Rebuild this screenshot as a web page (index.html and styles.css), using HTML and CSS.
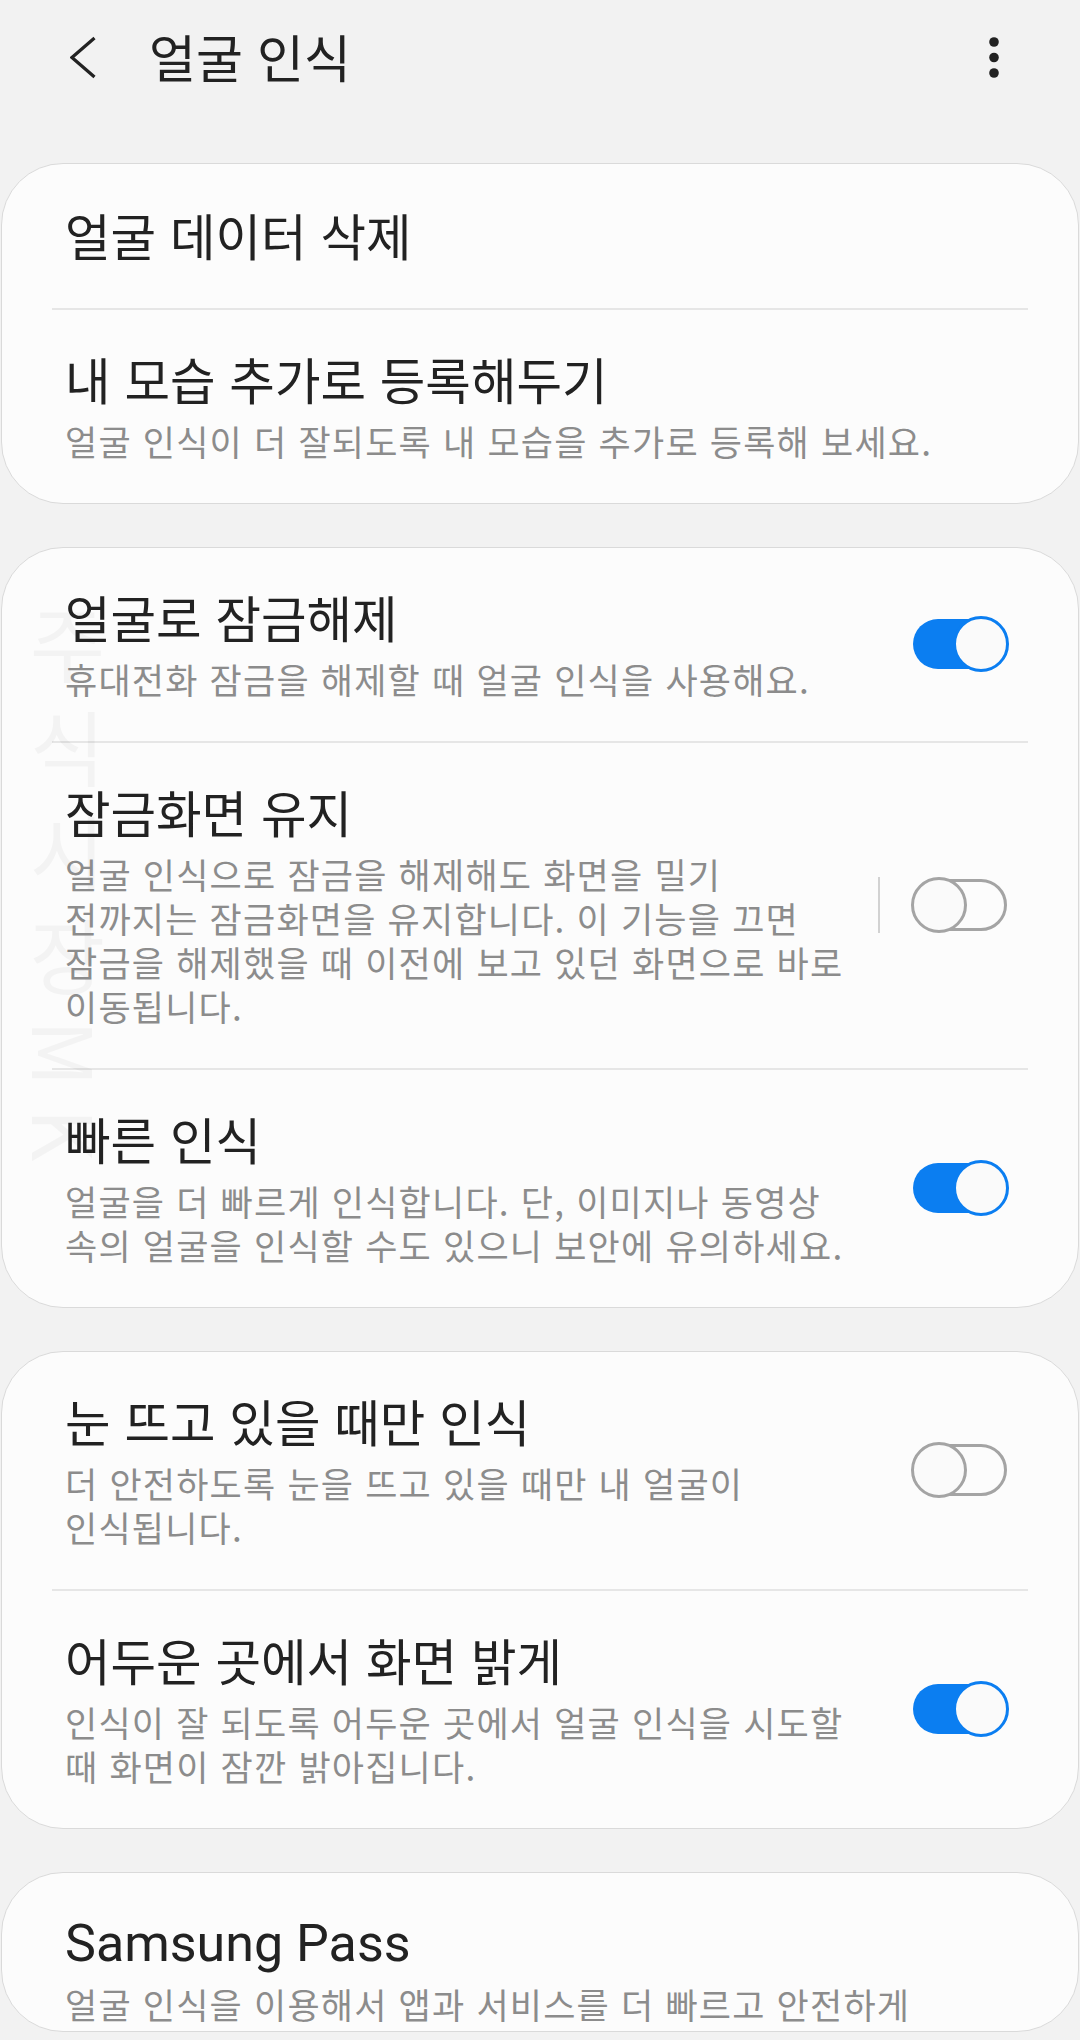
FILE: index.html
```html
<!DOCTYPE html>
<html lang="ko">
<head>
<meta charset="utf-8">
<title>얼굴 인식</title>
<link rel="stylesheet" href="styles.css">
</head>
<body>
<header class="appbar">
  <svg class="appbar__back" viewBox="0 0 26 44" aria-hidden="true"><path d="M24.5 3 L2 22.5 L24.5 42" fill="none" stroke="#222" stroke-width="3.2" stroke-linejoin="miter"/></svg>
  <h1 class="appbar__title">얼굴 인식</h1>
  <svg class="appbar__more" viewBox="0 0 12 44" aria-hidden="true"><circle cx="6" cy="8" r="4.8" fill="#222"/><circle cx="6" cy="23.5" r="4.8" fill="#222"/><circle cx="6" cy="39" r="4.8" fill="#222"/></svg>
</header>

<main class="list">
  <section class="card">
    <div class="row row--single">
      <div class="row__text"><div class="row__title">얼굴 데이터 삭제</div></div>
    </div>
    <div class="divider"></div>
    <div class="row">
      <div class="row__text">
        <div class="row__title">내 모습 추가로 등록해두기</div>
        <div class="row__sub">얼굴 인식이 더 잘되도록 내 모습을 추가로 등록해 보세요.</div>
      </div>
    </div>
  </section>

  <section class="card">
    <div class="watermark" aria-hidden="true">주식시장MK</div>
    <div class="row">
      <div class="row__text">
        <div class="row__title">얼굴로 잠금해제</div>
        <div class="row__sub">휴대전화 잠금을 해제할 때 얼굴 인식을 사용해요.</div>
      </div>
      <span class="switch switch--on"><span class="switch__track"></span><span class="switch__thumb"></span></span>
    </div>
    <div class="divider"></div>
    <div class="row">
      <div class="row__text">
        <div class="row__title">잠금화면 유지</div>
        <div class="row__sub">얼굴 인식으로 잠금을 해제해도 화면을 밀기<br>전까지는 잠금화면을 유지합니다. 이 기능을 끄면<br>잠금을 해제했을 때 이전에 보고 있던 화면으로 바로<br>이동됩니다.</div>
      </div>
      <span class="vsep"></span>
      <span class="switch switch--off"><span class="switch__track"></span><span class="switch__thumb"></span></span>
    </div>
    <div class="divider"></div>
    <div class="row">
      <div class="row__text">
        <div class="row__title">빠른 인식</div>
        <div class="row__sub">얼굴을 더 빠르게 인식합니다. 단, 이미지나 동영상<br>속의 얼굴을 인식할 수도 있으니 보안에 유의하세요.</div>
      </div>
      <span class="switch switch--on"><span class="switch__track"></span><span class="switch__thumb"></span></span>
    </div>
  </section>

  <section class="card">
    <div class="row">
      <div class="row__text">
        <div class="row__title">눈 뜨고 있을 때만 인식</div>
        <div class="row__sub">더 안전하도록 눈을 뜨고 있을 때만 내 얼굴이<br>인식됩니다.</div>
      </div>
      <span class="switch switch--off"><span class="switch__track"></span><span class="switch__thumb"></span></span>
    </div>
    <div class="divider"></div>
    <div class="row">
      <div class="row__text">
        <div class="row__title">어두운 곳에서 화면 밝게</div>
        <div class="row__sub">인식이 잘 되도록 어두운 곳에서 얼굴 인식을 시도할<br>때 화면이 잠깐 밝아집니다.</div>
      </div>
      <span class="switch switch--on"><span class="switch__track"></span><span class="switch__thumb"></span></span>
    </div>
  </section>

  <section class="card card--cut">
    <div class="row row--top">
      <div class="row__text">
        <div class="row__title row__title--latin">Samsung Pass</div>
        <div class="row__sub">얼굴 인식을 이용해서 앱과 서비스를 더 빠르고 안전하게</div>
      </div>
    </div>
  </section>
</main>
</body>
</html>
```

FILE: styles.css
```css
* {
  box-sizing: border-box;
  margin: 0;
  padding: 0;
}

html,
body {
  background: #f2f2f2;
}

body {
  width: 1080px;
  height: 2040px;
  overflow: hidden;
  font-family: "Noto Sans CJK KR", "Noto Sans", sans-serif;
  color: #222;
}

/* ---------- app bar ---------- */
.appbar {
  height: 112px;
  display: flex;
  align-items: center;
  padding: 0 80px 0 70px;
}

.appbar__back {
  width: 26px;
  height: 44px;
  margin-top: 2px;
  flex: none;
}

.appbar__title {
  margin-left: 53px;
  font-size: 51px;
  font-weight: 400;
  line-height: 60px;
  color: #222;
}

.appbar__more {
  margin-left: auto;
  width: 12px;
  height: 44px;
  flex: none;
}

/* ---------- list ---------- */
.list {
  display: flex;
  flex-direction: column;
  gap: 43px;
  padding: 51px 1px 0;
}

.card {
  position: relative;
  overflow: hidden;
  background: #fcfcfc;
  border: 1px solid #dadada;
  border-radius: 62px;
}

.card--cut {
  height: 160px;
  flex: none;
}

.row {
  position: relative;
  display: flex;
  align-items: center;
  padding: 39px 69px 40px 63px;
}

.row--single {
  padding-top: 41px;
  padding-bottom: 43px;
}

.row--top {
  padding-top: 41px;
}

.row__text {
  flex: 1;
  min-width: 0;
}

.row__title {
  font-size: 49.5px;
  line-height: 60px;
  font-weight: 400;
  color: #222;
  white-space: nowrap;
}

.row__title--latin {
  font-family: Roboto, "Noto Sans CJK KR", sans-serif;
  font-size: 52px;
}

.row__sub {
  margin-top: 10px;
  font-size: 35px;
  line-height: 44px;
  letter-spacing: 1.2px;
  color: #8c8c8c;
  white-space: nowrap;
}

.row--top .row__sub {
  margin-top: 8px;
}

.divider {
  height: 2px;
  margin: 0 50px;
  background: #e6e6e6;
}

.vsep {
  flex: none;
  width: 2px;
  height: 56px;
  margin-right: 31px;
  background: #d2d2d2;
}

/* ---------- switch ---------- */
.switch {
  position: relative;
  flex: none;
  width: 98px;
  height: 58px;
}

.switch__track {
  position: absolute;
  left: 2px;
  top: 4px;
  width: 94px;
  height: 50px;
  border-radius: 25px;
}

.switch__thumb {
  position: absolute;
  top: 1px;
  width: 56px;
  height: 56px;
  border-radius: 50%;
  background: #fafafa;
  border: 3px solid;
}

.switch--on .switch__track {
  background: #0b7ef1;
}

.switch--on .switch__thumb {
  right: 0;
  border-color: #0b7ef1;
}

.switch--off .switch__track {
  top: 3px;
  height: 52px;
  border: 3px solid #a4a4a4;
  border-radius: 26px;
}

.switch--off .switch__thumb {
  left: 0;
  border-color: #a4a4a4;
}

/* ---------- faint watermark ---------- */
.watermark {
  position: absolute;
  left: 24px;
  top: 56px;
  writing-mode: vertical-rl;
  font-size: 82px;
  line-height: 82px;
  letter-spacing: 22px;
  color: rgba(0, 0, 0, 0.035);
  pointer-events: none;
}
```
